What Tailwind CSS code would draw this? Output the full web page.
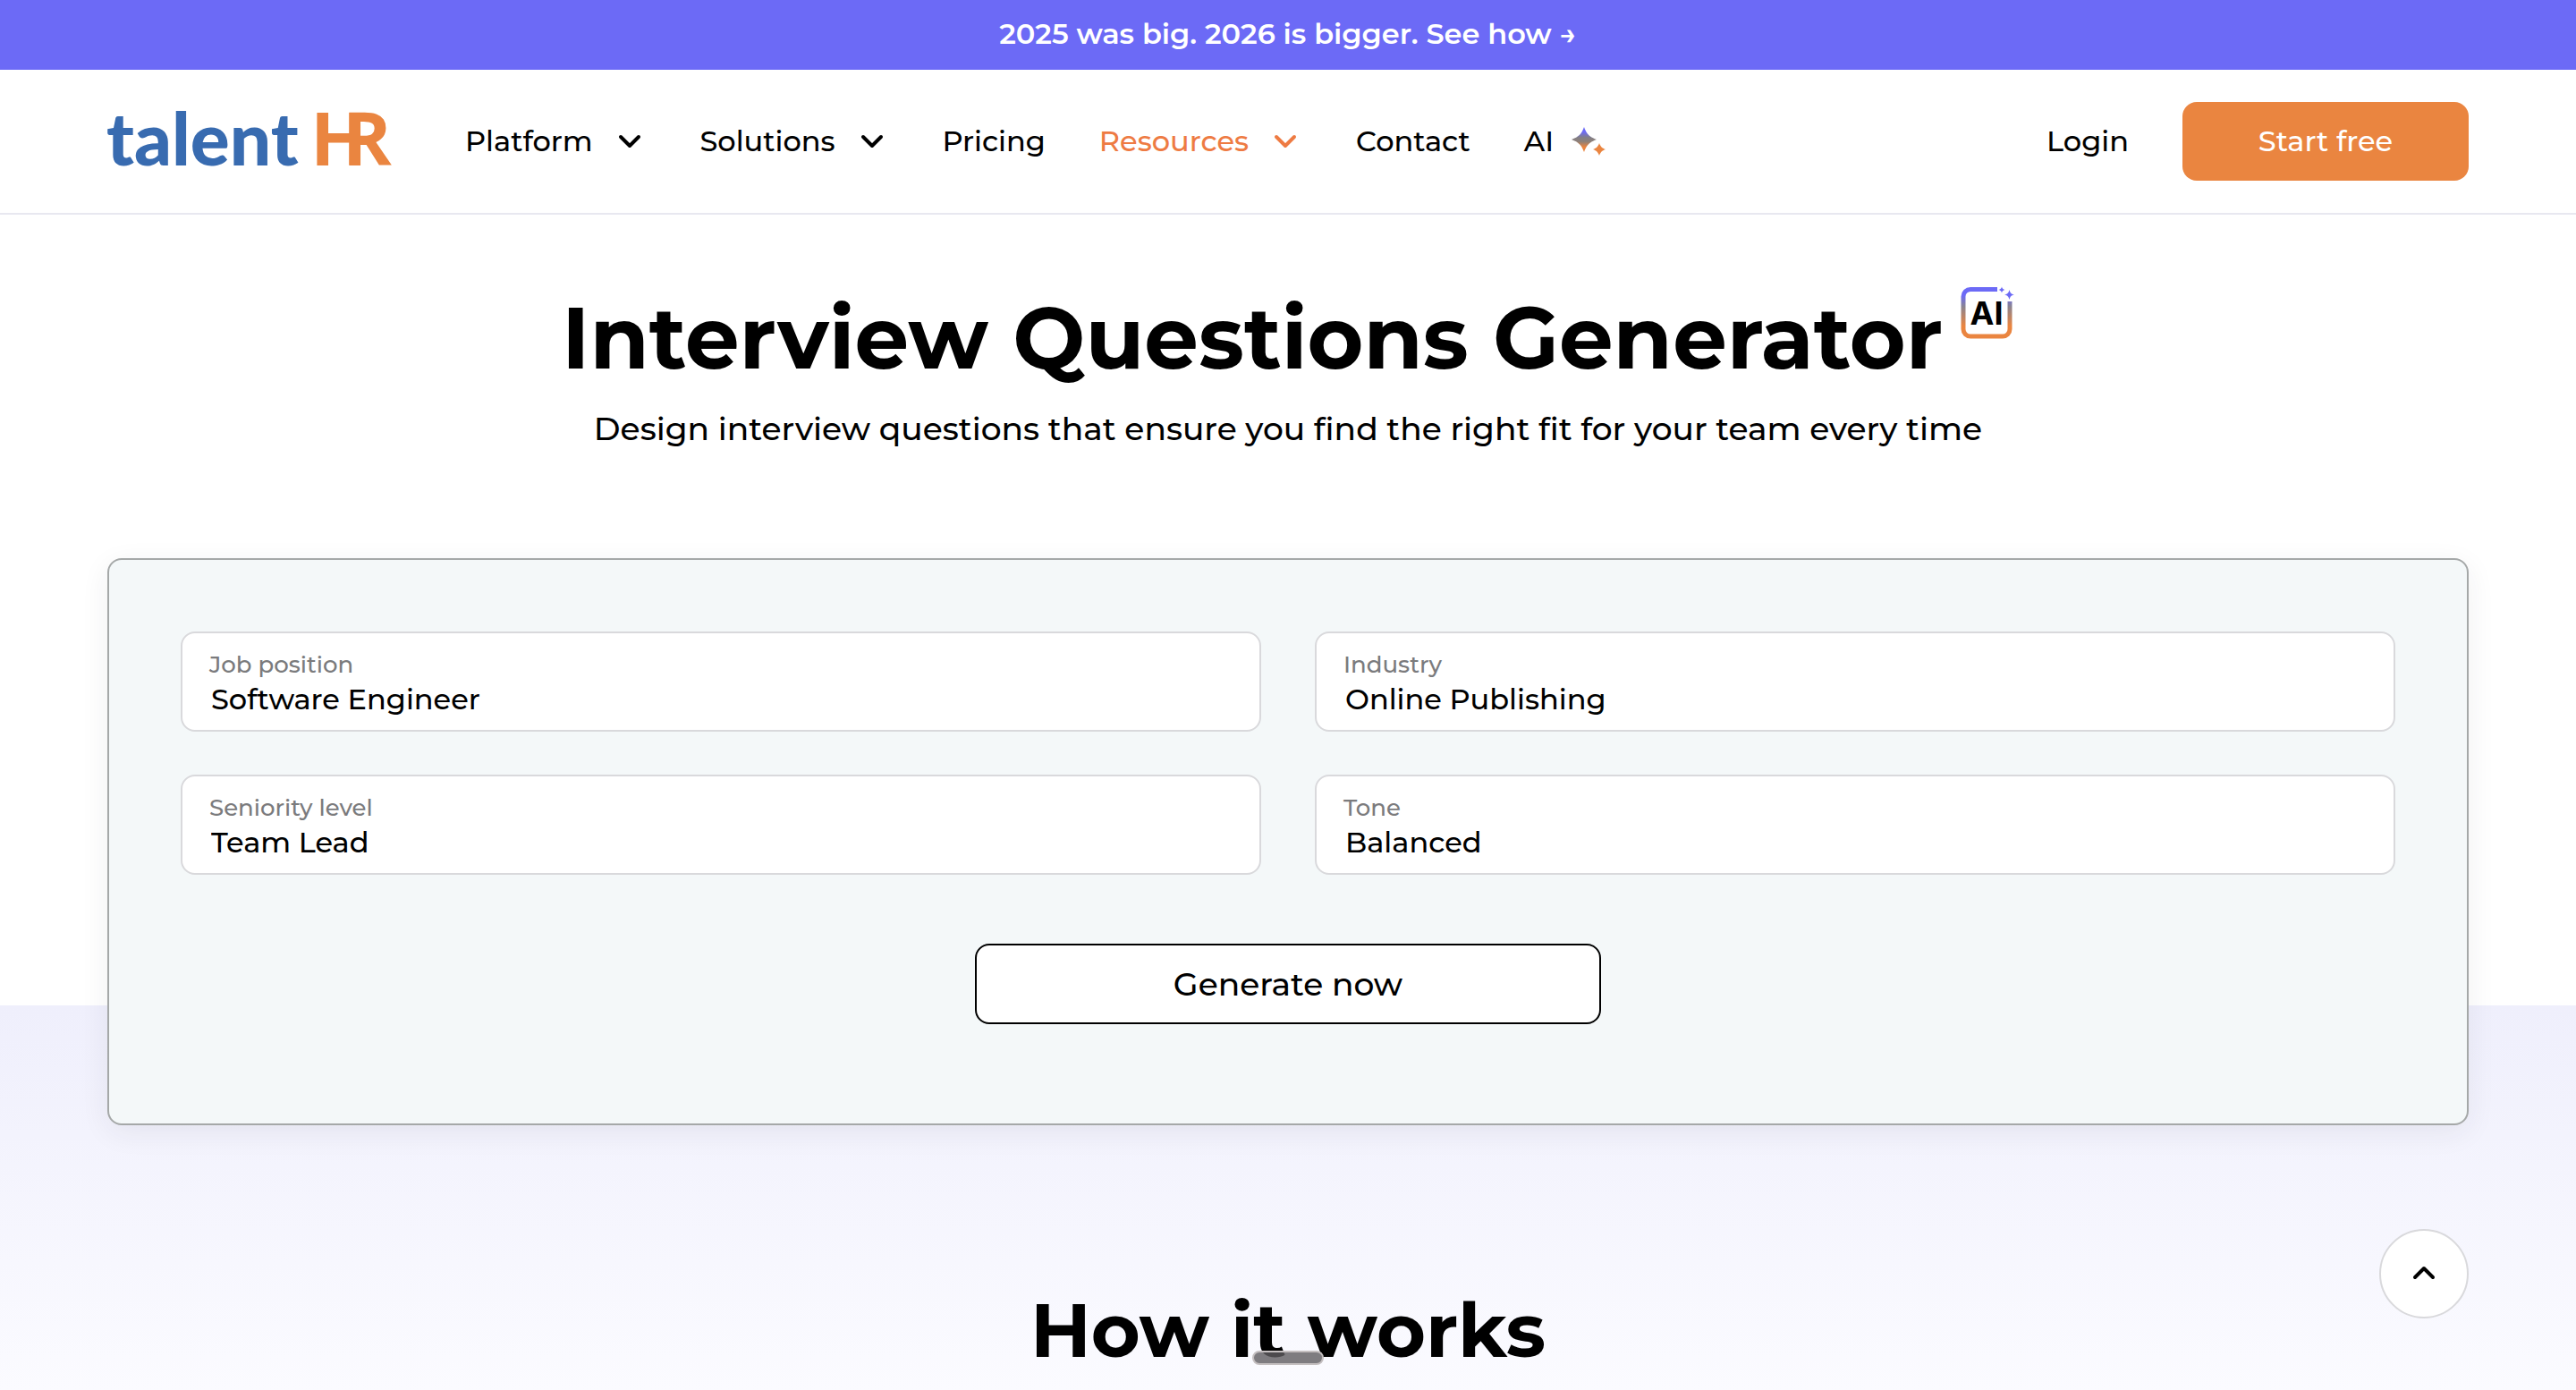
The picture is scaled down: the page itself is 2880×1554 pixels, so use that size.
<!DOCTYPE html>
<html lang="en">
<head>
    <meta charset="UTF-8">
    <title>Interview Questions Generator | TalentHR</title>
    <meta name="viewport" content="width=device-width, initial-scale=1.0">
    <!-- Tailwind CSS CDN -->
    <script src="https://cdn.jsdelivr.net/npm/@tailwindcss/browser@4"></script>
</head>
<body class="bg-white text-black font-medium font-['Montserrat','Inter',sans-serif] min-h-screen flex flex-col">

    <!-- Announcement bar -->
    <a href="#" class="flex items-center justify-center h-[78px] pb-[2px] bg-[#6c6af6] text-white text-[32px] leading-10 font-semibold">
        2025 was big. 2026 is bigger. See how →
    </a>

    <!-- Header -->
    <header class="flex items-center h-[162px] px-[120px] border-b-2 border-[#e8e8f0] text-[32px] leading-10">
        <a href="#" aria-label="TalentHR" class="mr-20">
            <svg class="overflow-visible" width="320" height="76" viewBox="0 0 320 76">
                <text x="-1" y="65" font-family="Lato" font-weight="900" font-size="82" fill="#386bb0">talent</text>
                <text x="227 263" y="65" font-family="Open Sans" font-weight="700" font-size="83" fill="#ea8540">HR</text>
            </svg>
        </a>
        <nav class="flex items-center gap-[60px]">
            <a href="#" class="flex items-center gap-6">Platform
                <svg class="w-9 h-9" viewBox="0 0 36 36" fill="none" stroke="currentColor" stroke-width="4" stroke-linecap="round" stroke-linejoin="round"><path d="M7 13l10 10 10-10"/></svg>
            </a>
            <a href="#" class="flex items-center gap-6">Solutions
                <svg class="w-9 h-9" viewBox="0 0 36 36" fill="none" stroke="currentColor" stroke-width="4" stroke-linecap="round" stroke-linejoin="round"><path d="M7 13l10 10 10-10"/></svg>
            </a>
            <a href="#">Pricing</a>
            <a href="#" class="flex items-center gap-6 text-[#ee7b43]">Resources
                <svg class="w-9 h-9" viewBox="0 0 36 36" fill="none" stroke="currentColor" stroke-width="4" stroke-linecap="round" stroke-linejoin="round"><path d="M7 13l10 10 10-10"/></svg>
            </a>
            <a href="#">Contact</a>
            <a href="#" class="flex items-center gap-5">AI
                <svg class="w-[38px] h-8" viewBox="0 0 38 32">
                    <defs>
                        <linearGradient id="spark" x1="0" y1="0" x2="0" y2="1">
                            <stop offset="0.2" stop-color="#6c6af6"/>
                            <stop offset="0.42" stop-color="#827f86"/>
                            <stop offset="0.58" stop-color="#8e8078"/>
                            <stop offset="0.8" stop-color="#ea8540"/>
                        </linearGradient>
                    </defs>
                    <path fill="url(#spark)" d="M14 0C17 8 20 11 28 14 20 17 17 20 14 28 11 20 8 17 0 14 8 11 11 8 14 0z"/>
                    <path fill="#ea8540" d="M31 18c1.500 4 3 5.500 7 7-4 1.500-5.500 3-7 7-1.500-4-3-5.500-7-7 4-1.500 5.500-3 7-7z"/>
                </svg>
            </a>
        </nav>
        <div class="flex items-center gap-[60px] ml-auto">
            <a href="#">Login</a>
            <a href="#" class="flex items-center justify-center w-80 h-[88px] rounded-2xl bg-[#ea8540] text-white">Start free</a>
        </div>
    </header>

    <!-- Hero -->
    <section class="pt-[78px] text-center">
        <div class="flex items-start justify-center gap-5">
            <h1 class="text-8xl leading-[120px] font-bold">Interview Questions Generator</h1>
            <svg class="w-[60px] h-16" viewBox="0 0 60 64" fill="none">
                <defs>
                    <linearGradient id="badge" x1="0" y1="0" x2="0" y2="62" gradientUnits="userSpaceOnUse">
                        <stop offset="0.2" stop-color="#6c6af6"/>
                        <stop offset="0.4" stop-color="#8a8490"/>
                        <stop offset="0.75" stop-color="#ea8540"/>
                    </linearGradient>
                </defs>
                <path d="M41 5.500H11a8 8 0 0 0-8 8V50a8 8 0 0 0 8 8h36a8 8 0 0 0 8-8V19" stroke="url(#badge)" stroke-width="5"/>
                <path fill="#6c6af6" d="M46 2.500c.6 2.200 1.300 2.900 3.500 3.500-2.200.6-2.900 1.300-3.500 3.500-.6-2.200-1.300-2.900-3.500-3.500 2.200-.6 2.900-1.300 3.500-3.500zM54.500 6c1 3.700 2 4.700 5.500 5.500-3.500.8-4.500 1.800-5.500 5.500-1-3.700-2-4.700-5.500-5.500 3.500-.8 4.500-1.800 5.500-5.500z"/>
                <text x="29" y="45" text-anchor="middle" font-family="Inter" font-size="36" font-weight="700" fill="#000">AI</text>
            </svg>
        </div>
        <p class="mt-4 text-4xl leading-[50px]">Design interview questions that ensure you find the right fit for your team every time</p>
    </section>

    <!-- Generator form -->
    <section class="relative z-10 mt-[120px] px-[120px]">
        <form class="h-[634px] px-20 pt-20 border-2 border-[#a5a8a8] rounded-2xl bg-[#f4f8f9] shadow-[0_8px_32px_rgba(40,40,60,0.07)]">
            <div class="grid grid-cols-2 gap-x-[60px] gap-y-12">
                <div class="h-28 px-[30px] pt-4 bg-white border-2 border-[#d9d9dc] rounded-2xl">
                    <label for="position" class="block text-[26px] leading-[38px] text-[#7b7b7d]">Job position</label>
                    <input type="text" id="position" name="position" value="Software Engineer" class="block w-full h-10 px-[2px] text-[32px] leading-10 focus:outline-none">
                </div>
                <div class="h-28 px-[30px] pt-4 bg-white border-2 border-[#d9d9dc] rounded-2xl">
                    <label for="industry" class="block text-[26px] leading-[38px] text-[#7b7b7d]">Industry</label>
                    <input type="text" id="industry" name="industry" value="Online Publishing" class="block w-full h-10 px-[2px] text-[32px] leading-10 focus:outline-none">
                </div>
                <div class="h-28 px-[30px] pt-4 bg-white border-2 border-[#d9d9dc] rounded-2xl">
                    <label for="seniority" class="block text-[26px] leading-[38px] text-[#7b7b7d]">Seniority level</label>
                    <input type="text" id="seniority" name="seniority" value="Team Lead" class="block w-full h-10 px-[2px] text-[32px] leading-10 focus:outline-none">
                </div>
                <div class="h-28 px-[30px] pt-4 bg-white border-2 border-[#d9d9dc] rounded-2xl">
                    <label for="tone" class="block text-[26px] leading-[38px] text-[#7b7b7d]">Tone</label>
                    <input type="text" id="tone" name="tone" value="Balanced" class="block w-full h-10 px-[2px] text-[32px] leading-10 focus:outline-none">
                </div>
            </div>
            <button type="button" class="block w-[700px] h-[90px] mx-auto mt-[77px] bg-white border-2 border-black rounded-2xl text-4xl">Generate now</button>
        </form>
    </section>

    <!-- How it works -->
    <section class="relative flex-1 -mt-[134px] pt-[310px] text-center bg-linear-to-b from-[#efeffc] to-[#fbfbff]">
        <h2 class="text-[84px] leading-[106px] font-bold">How it works</h2>
    </section>

    <!-- Back to top -->
    <button type="button" aria-label="Back to top" class="fixed z-20 right-[120px] bottom-20 flex items-center justify-center w-[100px] h-[100px] rounded-full bg-white border-2 border-[#d9d9dc]">
        <svg class="w-9 h-9" viewBox="0 0 36 36" fill="none" stroke="currentColor" stroke-width="4" stroke-linecap="round" stroke-linejoin="round"><path d="M8 22l10-10 10 10"/></svg>
    </button>

    <!-- Drag handle -->
    <div class="fixed z-20 left-1/2 bottom-7 -translate-x-1/2 w-20 h-4 rounded-full bg-[#5f5c60]/80 border-2 border-[#c4bfc0]"></div>

</body>
</html>
